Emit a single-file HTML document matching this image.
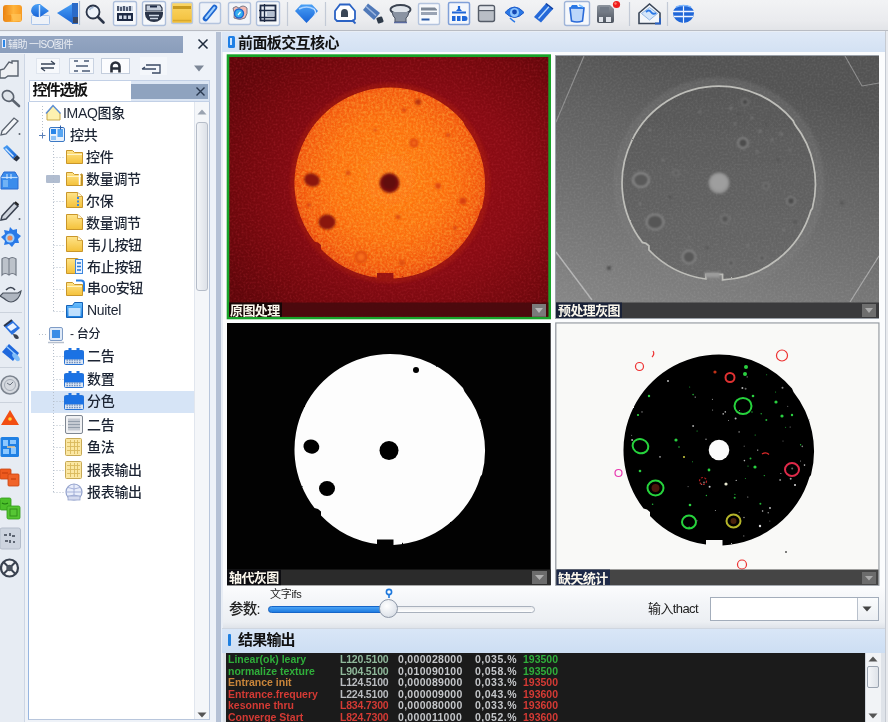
<!DOCTYPE html>
<html lang="zh">
<head>
<meta charset="utf-8">
<title>前面板交互核心</title>
<style>
html,body{margin:0;padding:0;}
body{width:888px;height:722px;overflow:hidden;position:relative;background:#e9eef5;font-family:"Liberation Sans","Noto Sans CJK SC",sans-serif;color:#1a1a1a;}
.abs{position:absolute;}
#app{position:absolute;left:0;top:0;width:888px;height:722px;overflow:hidden;filter:blur(0.45px);}
/* top toolbar */
#topbar{left:0;top:0;width:888px;height:31px;background:linear-gradient(#f2f3f5,#eaebee 70%,#e2e4e8);border-bottom:1px solid #b9bcc3;box-sizing:border-box;}
.tb{position:absolute;top:2px;width:24px;height:24px;}
/* left vertical toolbar */
#vbar{left:0;top:54px;width:25px;height:668px;background:#e7ecf3;border-right:1px solid #cdd6e4;box-sizing:border-box;}
/* left panel */
#lpanel{left:0px;top:32px;width:216px;height:690px;background:#eef2f8;}
#ltitle{left:0;top:36px;width:183px;height:17px;background:linear-gradient(#94a6c2,#8a9dbb);color:#fff;font-size:11px;line-height:17px;white-space:nowrap;overflow:hidden;}
#divider{left:216px;top:32px;width:5px;height:690px;background:#b5c1d5;}
#tree{left:27.500px;top:102px;width:182.500px;height:618px;background:#fff;border-left:1.500px solid #98b6e0;border-right:1px solid #b8c6dc;border-bottom:1px solid #b8c6dc;box-sizing:border-box;}
.ti{position:absolute;font-weight:500;font-size:14px;line-height:22px;height:22px;white-space:nowrap;color:#1c2433;letter-spacing:-0.3px;}
.ico{position:absolute;}
/* main */
#main{left:222px;top:32px;width:666px;height:690px;background:linear-gradient(#fbfcfd 0,#fbfcfd 554px,#f3f5f8 570px,#eceff3 590px,#dfe3e9 596px);border-left:1px solid #e9eef5;box-sizing:border-box;}
#mtitle{left:222px;top:32px;width:663px;height:20px;background:linear-gradient(#dfe9f7,#d3e1f3);}
.cap{position:absolute;height:15px;color:#fbf7ec;font-size:13px;font-weight:bold;line-height:15px;white-space:nowrap;letter-spacing:-0.6px;}
.con{position:absolute;font:bold 10.5px/11.55px "Liberation Sans",sans-serif;white-space:pre;letter-spacing:0px;}
</style>
</head>
<body>
<div id="app">
<div id="topbar" class="abs"></div>
<div id="lpanel" class="abs"></div>
<div id="vbar" class="abs"></div>
<div id="divider" class="abs"></div>
<div id="main" class="abs"></div>
<!--TOP-START-->
<svg class="abs" style="left:0;top:0;" width="888" height="32" viewBox="0 0 888 32">
<defs>
  <linearGradient id="og" x1="0" y1="0" x2="1" y2="0"><stop offset="0" stop-color="#e9800f"/><stop offset="0.55" stop-color="#ffb53e"/><stop offset="1" stop-color="#f79a22"/></linearGradient>
  <linearGradient id="bl" x1="0" y1="0" x2="0" y2="1"><stop offset="0" stop-color="#4aa0f6"/><stop offset="1" stop-color="#1763d6"/></linearGradient>
  <linearGradient id="yl" x1="0" y1="0" x2="0" y2="1"><stop offset="0" stop-color="#fbd768"/><stop offset="1" stop-color="#f3bf3a"/></linearGradient>
  <linearGradient id="gy" x1="0" y1="0" x2="0" y2="1"><stop offset="0" stop-color="#8d949e"/><stop offset="1" stop-color="#4c535e"/></linearGradient>
  <g id="btn"><rect x="0.500" y="0.500" width="23" height="24" rx="2" fill="#f6f8fb" stroke="#aebfdb" stroke-width="1.4"/></g>
</defs>
<!-- 1 orange -->
<rect x="3" y="5" width="19" height="17" rx="3" fill="url(#og)"/><path d="M11 14 h10 v7 h-8z" fill="#ffc45a" opacity=".7"/><path d="M4 15 h7 v6 h-6z" fill="#f0901a" opacity=".8"/>
<!-- 2 blue bubble -->
<rect x="31.500" y="15.500" width="18" height="9" rx="1" fill="#eef2f8" stroke="#a9c4ea"/><path d="M31 11 a7 7 0 0 1 7 -7 h2 l9 7 l-9 6 h-2 a7 7 0 0 1 -7 -6z" fill="url(#bl)"/><path d="M39.500 5 v12" stroke="#d6e8ff" stroke-width="1.4"/>
<!-- 3 blue left arrow -->
<path d="M57 13 l15 -9 v19z" fill="url(#bl)"/><path d="M72 3 h6 v21 h-6z" fill="#2a6ac8"/><path d="M73 17 h5 v6 h-5z" fill="#3a4660"/><path d="M79.500 1 v24" stroke="#a8bcd8" stroke-width="1.200"/>
<!-- 4 magnifier -->
<circle cx="93" cy="12" r="6.500" fill="#eef3fa" stroke="#2a3448" stroke-width="1.800"/><path d="M98 17 l5.500 5.500" stroke="#2a3448" stroke-width="2.600" stroke-linecap="round"/><path d="M89.500 10 a4 4 0 0 1 4 -2.500" stroke="#9fb4d0" stroke-width="1.500" fill="none"/>
<!-- 5 button calc -->
<use href="#btn" x="113" y="1"/><path d="M117 6 h16 v5 h-16z" fill="#c9d2e0"/><path d="M118 6 v5 M121 7 v4 M124 6 v5 M127 7 v4 M130 6 v5" stroke="#1e2a44" stroke-width="1.4"/><rect x="117" y="13" width="16" height="8" fill="#1e2a44"/><path d="M119 15.500 h3 v3.500 h-3z M123.500 15.500 h3 v3.500 h-3z M128 15.500 h3 v3.500 h-3z" fill="#cfd8e6"/>
<!-- 6 button basket -->
<use href="#btn" x="142" y="1"/><path d="M146 5 h14 l2 3 v3 h-16z" fill="#c5cedc" stroke="#2a3448" stroke-width="1.200"/><path d="M150 6.500 h7" stroke="#1e2a44" stroke-width="2"/><path d="M145 12 h18 v2 a9 8 0 0 1 -18 0z" fill="#2a3448"/><path d="M149 15.500 h10 M150 18.500 h8" stroke="#cfd8e6" stroke-width="1.300"/>
<!-- 7 yellow window -->
<rect x="171.500" y="2.500" width="21" height="21" rx="1.500" fill="url(#yl)" stroke="#b9c9e2" stroke-width="1.400"/><rect x="173" y="6" width="18" height="3" fill="#c89a20"/><path d="M173 20.500 h18" stroke="#d9a92c" stroke-width="1.500"/>
<!-- 8 pencil button -->
<rect x="199.500" y="2.500" width="21" height="21" rx="2" fill="#eef2f8" stroke="#b4c4de" stroke-width="1.400"/><path d="M205.500 18.500 l9 -11" stroke="#1e66d0" stroke-width="5.500" stroke-linecap="round"/><path d="M206 18 l8.500 -10.500" stroke="#9fd0ff" stroke-width="2" stroke-linecap="round"/>
<!-- 9 button circle -->
<rect x="228.500" y="2.500" width="22" height="22" rx="2" fill="#f3f5f9" stroke="#b4c4de" stroke-width="1.400"/><path d="M233 8 q3 -3 6 0 q4 -4 8 0 q1 6 -2 10 q-5 3 -11 0 q1 -5 -1 -10z" fill="#f3b8b0" stroke="#5a6478" stroke-width="0.800"/><circle cx="239" cy="13.500" r="4.500" fill="#36b0ee" stroke="#1e66d0" stroke-width="1.400"/><path d="M238 15 l2.500 -3" stroke="#fff" stroke-width="1.200"/>
<!-- 10 button frame -->
<use href="#btn" x="256" y="1"/><rect x="260.500" y="5.500" width="15" height="15" fill="#e6ebf3" stroke="#1e2a44" stroke-width="1.800"/><path d="M264.500 4 v18 M259 10.500 h17 M259 17.500 h17" stroke="#1e2a44" stroke-width="1.300"/><rect x="267" y="12" width="7" height="4" fill="#b4bfd0"/>
<!-- separators -->
<path d="M287.500 2 v24 M325.500 2 v24 M629.500 2 v24 M667.500 2 v24" stroke="#c3cad6" stroke-width="1.200"/>
<!-- 11 diamond -->
<path d="M295 11 l6 -6.500 h11 l6 6.500 l-11.500 12z" fill="url(#bl)"/><path d="M299 9 q7.500 -4 15 0" stroke="#a9d2ff" stroke-width="1.500" fill="none"/><path d="M314 9 q3 3 0 7" stroke="#cfe4ff" stroke-width="1.200" fill="none"/>
<!-- 12 house -->
<path d="M335 11 l5 -6.500 h9.500 l5.500 6.500 v8 l-2 2 h-16 l-2 -2z" fill="#fff" stroke="#2a62c4" stroke-width="1.800"/><path d="M341 17 v-4 a3.500 4 0 0 1 7 0 v4z" fill="#3a4656"/><path d="M352 20 l3.500 3.500" stroke="#2a62c4" stroke-width="1.800"/>
<!-- 13 bucket -->
<path d="M368 3.500 l12 9.500 l-6 7 l-11 -10z" fill="#4f78b8"/><path d="M366 6.500 l10 9" stroke="#9fb8e0" stroke-width="1.500"/><rect x="377" y="17" width="6" height="6" rx="1" fill="#2e3a4a" transform="rotate(-20 380 20)"/>
<!-- 14 stamp -->
<ellipse cx="400.500" cy="9.500" rx="10" ry="4.500" fill="#dfe4ea" stroke="#3a4250" stroke-width="1.800"/><path d="M392 12 q1 5 3 6 v4 h11 v-4 q2 -1 3 -6" fill="#8a93a2" stroke="#4a5260" stroke-width="1"/><path d="M394 22.500 h13" stroke="#5a6aa0" stroke-width="1.500"/>
<!-- 15 doc -->
<rect x="418.500" y="3.500" width="21" height="21" rx="1.500" fill="#f7f9fc" stroke="#b4c4de" stroke-width="1.400"/><path d="M421 7.500 h14 l2 2 v1 h-16z" fill="#7d8796"/><path d="M421 13.500 h16" stroke="#9aa4b4" stroke-width="3"/><path d="M421.500 19.500 h8" stroke="#2a5aa8" stroke-width="2"/>
<!-- 16 blue org button -->
<rect x="448.500" y="2.500" width="21" height="22" rx="1.500" fill="#f4f7fb" stroke="#7f9fd8" stroke-width="1.500"/><path d="M459 6 v5 M452 12.500 h14" stroke="#1e66d8" stroke-width="2.200"/><path d="M456 11 q3 -5 6 0z" fill="#1e66d8"/><path d="M452 16 h3.500 v5 h-3.500z M457 16 h3.500 v5 h-3.500z M462 16 h3 a2.500 2.500 0 0 1 0 5 h-3z" fill="#1e66d8"/>
<!-- 17 gray window -->
<rect x="478.500" y="5.500" width="16" height="16" rx="2" fill="#b9bec6" stroke="#555c68" stroke-width="1.400"/><path d="M479 10.500 h15" stroke="#555c68" stroke-width="1.300"/><rect x="479.500" y="6.500" width="14" height="3.500" fill="#e2e5ea"/>
<!-- 18 eye -->
<path d="M505 12.500 q9.500 -11 19 0 q-9.500 10 -19 0z" fill="#2a78e6" stroke="#1e5ac8" stroke-width="1"/><circle cx="514.500" cy="12.500" r="4.500" fill="#8cc4ff"/><circle cx="514.500" cy="12" r="2.400" fill="#1448b4"/><path d="M510 18 q3 3 5 4" stroke="#2a78e6" stroke-width="1.500" fill="none"/>
<!-- 19 blue pencil -->
<path d="M534 17 l12 -13.500 l7 5.500 l-12 13.500z" fill="#2468d8"/><path d="M538.500 18.500 l11.500 -13" stroke="#bfe0ff" stroke-width="1.300"/><path d="M546 3.500 l7 5.500" stroke="#0e3ea0" stroke-width="1.500"/>
<!-- 20 trash button -->
<rect x="564.500" y="1.500" width="25" height="24" rx="2" fill="#f6f8fb" stroke="#9fb4d8" stroke-width="1.400"/><path d="M570 8 h14 l-1.500 13 q-5.500 2 -11 0z" fill="#bcd6fa" stroke="#2a6ad8" stroke-width="1.600"/><path d="M570 8 l2 -3 h5 l1 2 h6 l-1 2" fill="#2a78e6"/><path d="M579 5 l4 2" stroke="#7fc0ff" stroke-width="1.500"/>
<!-- 21 save + red dot -->
<path d="M597 7 q0 -2 2 -2 h11 l4 4 v12 q0 2 -2 2 h-13 q-2 0 -2 -2z" fill="url(#gy)"/><rect x="600" y="7" width="9" height="5" fill="#727a86"/><path d="M599 17 h4 v5 h-4z M606 17 h5 v5 h-5z" fill="#dfe3e9"/><circle cx="616.500" cy="4.500" r="3.600" fill="#ee1c1c"/><circle cx="615.500" cy="3.500" r="1.200" fill="#ff7a6a"/>
<!-- 22 envelope -->
<path d="M639 13 l10.500 -9 l10.500 9 v10.500 h-21z" fill="#f3f6fa" stroke="#3a4658" stroke-width="1.600"/><path d="M641.500 13.500 l8 -6 l8 6 l-8 6.500z" fill="#d5e6fa" stroke="#7fa8dc" stroke-width="0.800"/><path d="M646 12 q3 -3 5 0 q2 3 5 1" stroke="#2a78e6" stroke-width="1.800" fill="none"/><path d="M660 18 v5.500 h-5" stroke="#2a62c4" stroke-width="1.800" fill="none"/>
<!-- 23 globe -->
<path d="M673 13 a10.500 8 0 0 1 21 0 a10.500 10 0 0 1 -21 0z" fill="#1f66d8"/><path d="M673 11.500 h21 M674 16.500 h19" stroke="#eef4ff" stroke-width="1.400"/><path d="M683.500 5 v18" stroke="#eef4ff" stroke-width="1.200"/><path d="M676 7 q7.500 -3 15 0" stroke="#7fb8ff" stroke-width="1.400" fill="none"/>
</svg>
<!--TOP-END-->
<!--VB-START-->
<svg class="abs" style="left:0;top:32px;" width="26" height="690" viewBox="0 32 26 690">
<defs>
  <linearGradient id="vb" x1="0" y1="0" x2="1" y2="1"><stop offset="0" stop-color="#4aa0f6"/><stop offset="1" stop-color="#1560d0"/></linearGradient>
</defs>
<!-- 1 hand/folder -->
<path d="M0 70 l4 -1 l5 -7 l3 1 v-2 h6 v15 h-10 l-3 2 h-5z" fill="#eef0f3" stroke="#5a626e" stroke-width="1.400"/>
<!-- 2 magnifier -->
<ellipse cx="8" cy="96" rx="6" ry="5" fill="#dfe4ea" stroke="#5a626e" stroke-width="1.600" transform="rotate(35 8 96)"/><path d="M12.500 100 l6.500 6" stroke="#5a626e" stroke-width="2.600" stroke-linecap="round"/>
<!-- 3 pencil outline -->
<path d="M2 131 l12 -13 l4 3 l-12 13 l-5 1z" fill="#f4f6f9" stroke="#5a626e" stroke-width="1.300"/><circle cx="19.500" cy="134" r="1" fill="#5a626e"/>
<!-- 4 blue marker -->
<path d="M3 148 l4 -3 l10 10 l-4 4z" fill="url(#vb)"/><path d="M5.500 148.500 l8 8" stroke="#cfe6ff" stroke-width="1.400"/><path d="M13 159 l4 -4 l3 3 l-3.500 3.500z" fill="#2a3242"/>
<!-- 5 blue box -->
<path d="M1 177 l3 -5 h11 l3 5 v12 h-17z" fill="#3a8cec" stroke="#2a6ad0" stroke-width="1"/><path d="M1.500 177.500 h16" stroke="#bcdcff" stroke-width="1.200"/><path d="M7 174 v5 M11 174 v5" stroke="#d6eaff" stroke-width="1"/><rect x="3" y="180" width="5" height="7" fill="#7fbcf8" opacity=".8"/>
<!-- 6 pencil dark -->
<path d="M2 216 l12 -13 l4 3 l-12 13 l-5 1z" fill="#cfd5de" stroke="#3a4250" stroke-width="1.500"/><path d="M15 202 l3.500 3" stroke="#222" stroke-width="2"/><circle cx="19.500" cy="219" r="1" fill="#5a626e"/>
<!-- 7 blue gear -->
<path d="M10 227 l3 3 l4 -1 l0 4 l4 3 l-3 3 l1 4 l-4 0 l-3 4 l-3 -3 l-5 1 l1 -4 l-4 -4 l4 -3 l-1 -4 l5 1z" fill="#2a7ae8"/><circle cx="10" cy="238" r="4.500" fill="#9fd0ff"/><circle cx="10" cy="238" r="2.600" fill="#e88a5a"/>
<!-- 8 book -->
<path d="M2 259 q3 -3 7 0 q3 -3 7 0 v16 q-4 -3 -7 0 q-4 -3 -7 0z" fill="#bcc2ca" stroke="#707884" stroke-width="1.200"/><path d="M9 259 v16" stroke="#707884" stroke-width="1"/>
<!-- 9 teapot -->
<path d="M6 290 q5 -5 9 0" stroke="#3a4250" stroke-width="1.600" fill="none"/><path d="M3 293 h15 l3 -2 q-1 6 -5 9 q-5 4 -10 0 q-2 -2 -6 -4z" fill="#aeb5bf" stroke="#4a525e" stroke-width="1.200"/>
<path d="M0 312.500 h22 M0 367.500 h22 M0 402.500 h22" stroke="#cbd2dc" stroke-width="1"/>
<!-- 10 paint bucket -->
<path d="M4 326 l8 -6 l8 8 l-8 7z" fill="#2a72e0"/><path d="M7 327 l6 -4 l4 4 l-6 4z" fill="#eaf3ff"/><path d="M4 326 l8 -6" stroke="#2a3448" stroke-width="2"/><path d="M13 334 q4 0 5 2 q2 3 -1 3 q-3 0 -4 -5z" fill="#3a4250"/>
<!-- 11 blue cylinder -->
<path d="M2 352 l7 -8 l10 9 l-6 8z" fill="#1f68dc"/><ellipse cx="16" cy="357" rx="2.500" ry="5" fill="#7fbcf8" transform="rotate(-40 16 357)"/><path d="M6 346 l9 8" stroke="#9fd0ff" stroke-width="1.200"/>
<!-- 12 gray circle -->
<circle cx="10" cy="385" r="9" fill="#d5d9df" stroke="#7c848f" stroke-width="1.600"/><circle cx="10" cy="385" r="5.500" fill="none" stroke="#a5acb6" stroke-width="1"/><path d="M7 383 l3 2 l3 -3" stroke="#6a727e" stroke-width="1" fill="none"/>
<!-- 13 triangle -->
<path d="M1 425 l9 -15 l9 15z" fill="#f24e12"/><circle cx="10" cy="419" r="1.800" fill="#ffd23a"/>
<!-- 14 blue grid -->
<rect x="0.500" y="437" width="18.500" height="20" rx="1.500" fill="#1f80e4"/><path d="M3 440 h5 v6 h-5z M10 440 h6 v4 h-6z M3 449 h6 v5 h-6z M11 447 h5 v7 h-5z" fill="#8cc8ff"/><path d="M7 447 h8" stroke="#f0c890" stroke-width="1.500"/>
<!-- 15 orange squares -->
<rect x="0" y="469" width="11" height="10" rx="1" fill="#ee5a1e" stroke="#c84410" stroke-width="0.800"/><rect x="8" y="474" width="11" height="12" rx="1" fill="#f0642a" stroke="#c84410" stroke-width="0.800"/><path d="M2 473 h6 M11 479 h5" stroke="#c03a0a" stroke-width="1"/>
<!-- 16 green squares -->
<rect x="0" y="498" width="11" height="12" rx="1.500" fill="#4cc02a" stroke="#2e9a18" stroke-width="0.800"/><rect x="7" y="506" width="13" height="13" rx="1.500" fill="#56c634" stroke="#2e9a18" stroke-width="0.800"/><path d="M2 503 q3 2 6 0" stroke="#1e7a10" stroke-width="1.200" fill="none"/><rect x="10" y="509" width="7" height="7" fill="none" stroke="#2e8a1a" stroke-width="0.900"/>
<!-- 17 gray button -->
<rect x="0" y="528" width="20.500" height="21" rx="2" fill="#cdd4df" stroke="#b4bdcb" stroke-width="1"/><path d="M4 535 h3 M10 533 v3 M12 536 h3 M5 541 h3 M10 540 v3 M13 542 h2" stroke="#3a4250" stroke-width="1.500"/>
<!-- 18 wheel -->
<circle cx="9.500" cy="568" r="8.500" fill="#f4f5f7" stroke="#3a4250" stroke-width="2.200"/><circle cx="9.500" cy="568" r="3.200" fill="#4a525e"/><path d="M3.500 562 l4 4 M15.500 562 l-4 4 M3.500 574 l4 -4 M15.500 574 l-4 -4" stroke="#3a4250" stroke-width="2"/>
</svg>
<!--VB-END-->
<!--LEFT-START-->
<!-- left panel title -->
<div id="ltitle" class="abs"><span style="display:inline-block;width:4px;height:9px;background:#2b86e6;border:1px solid #dfeaff;margin:3px 2px 0 2px;vertical-align:top;box-sizing:border-box;"></span><span style="letter-spacing:-0.6px;opacity:.8;font-size:10px;">辅助 一ISO图件</span></div>
<svg class="abs" style="left:197px;top:38px;" width="12" height="12" viewBox="0 0 12 12"><path d="M1.5 1.5 L10.5 10.5 M10.5 1.5 L1.5 10.5" stroke="#1d2a3c" stroke-width="1.5" fill="none"/></svg>
<!-- sub toolbar -->
<div class="abs" style="left:36px;top:58px;width:24px;height:16px;background:#f7f9fc;border:1px solid #dfe5ee;box-sizing:border-box;"></div>
<div class="abs" style="left:69px;top:58px;width:25px;height:16px;background:#f7f9fc;border:1px solid #c9d3e2;box-sizing:border-box;"></div>
<div class="abs" style="left:101px;top:58px;width:29px;height:16px;background:#fbfcfe;border:1px solid #c3cddc;box-sizing:border-box;"></div>
<div class="abs" style="left:140px;top:57px;width:27px;height:18px;background:#f4f7fb;"></div>
<svg class="abs" style="left:36px;top:57px;" width="180" height="20" viewBox="0 0 180 20" fill="none" stroke="#3a4658" stroke-width="1.3">
  <path d="M5 7 h14 M19 7 l-4 -3 M5 11 h13 M5 11 l4 3"/>
  <path d="M38 4 h4 M48 4 h5 M40 9 h12 M38 14 h4 M46 14 h8" stroke="#4a5a74"/>
  <path d="M75.500 15.500 v-6 a4 4 0 0 1 8 0 v6 M75.500 11.500 h8" stroke="#2a2f3a" stroke-width="2.600"/>
  <path d="M110 8 h14 v8 h-8 M106 12 h14 M106 12 l3 -2" stroke="#3a4a64"/>
  <path d="M158 8.500 h10 l-5 6z" fill="#7d8797" stroke="none"/>
</svg>
<!-- search row -->
<div class="abs" style="left:29px;top:80px;width:181px;height:22px;background:#dce6f4;border:1px solid #c2d0e6;box-sizing:border-box;"></div>
<div class="abs" style="left:131px;top:83.500px;width:77px;height:15px;background:#8fa3bf;"></div>
<div class="abs" style="left:30px;top:81px;width:101px;height:20px;background:#fff;"></div>
<div class="abs" style="left:32.500px;top:80px;font-size:15px;line-height:20px;font-weight:bold;color:#111;white-space:nowrap;letter-spacing:-1.500px;">控件选板</div>
<svg class="abs" style="left:195px;top:85.500px;" width="11" height="11" viewBox="0 0 11 11"><path d="M1.500 1.500 L9.500 9.500 M9.500 1.500 L1.500 9.500" stroke="#2a3950" stroke-width="1.400" fill="none"/></svg>
<!-- tree -->
<div id="tree" class="abs"></div>
<div class="abs" style="left:31px;top:391px;width:163px;height:22px;background:#d6e4f6;"></div>
<!-- tree dotted lines -->
<svg class="abs" style="left:30px;top:101px;" width="165" height="420" viewBox="0 0 165 420" fill="none" stroke="#b7c0cc" stroke-width="1" stroke-dasharray="1 2">
  <path d="M12.5 5 v30 M9 34.500 h8"/>
  <path d="M23.500 44 v168 M23.500 56.500 h10 M23.500 100.500 h10 M23.500 144.500 h10 M23.500 166.500 h10 M23.500 188.500 h10 M23.500 210.500 h10"/>
  <path d="M9 233.500 h8"/>
  <path d="M23.500 243 v150 M23.500 255.500 h10 M23.500 278.500 h10 M23.500 300.500 h10 M23.500 324.500 h10 M23.500 346.500 h10 M23.500 369.500 h10 M23.500 391.500 h10"/>
</svg>
<div class="abs" style="left:46px;top:175px;width:14px;height:8px;background:#a9b6cb;border-radius:1px;opacity:.9;"></div>
<!-- tree icons -->
<svg class="abs" style="left:30px;top:101px;" width="165" height="420" viewBox="0 0 165 420">
  <defs>
    <linearGradient id="fy" x1="0" y1="0" x2="0" y2="1"><stop offset="0" stop-color="#ffe48a"/><stop offset="1" stop-color="#f4c13a"/></linearGradient>
    <linearGradient id="fb" x1="0" y1="0" x2="0" y2="1"><stop offset="0" stop-color="#6cc0ff"/><stop offset="1" stop-color="#1b7fe0"/></linearGradient>
    <g id="fold"><path d="M0.5 3.500 h6 l2 2 h8 v11 h-16z" fill="url(#fy)" stroke="#c9962a" stroke-width="1"/><path d="M1 7.500 h15" stroke="#fff3c4" stroke-width="1"/></g>
    <g id="foldp"><path d="M0.5 1.500 h11 l5 4 v11 h-16z" fill="url(#fy)" stroke="#c9962a" stroke-width="1"/><path d="M11.500 1.500 v4 h5" fill="#fff8dc" stroke="#c9962a" stroke-width="0.8"/></g>
    <g id="cal"><rect x="0.500" y="3.500" width="19" height="14" rx="1" fill="#dbe6f4" stroke="#2a74d4"/><path d="M0.500 4 h4 v-3 h3 v3 h5 v-3 h3 v3 h4 v8.500 h-19z" fill="#1b72e4"/><path d="M2.500 13 h15 M2.500 15.500 h15" stroke="#6f8fbf" stroke-width="1.300" stroke-dasharray="1.500 1"/></g>
    <g id="grid"><rect x="0.500" y="0.500" width="16" height="17" rx="1" fill="#fbe7a2" stroke="#c7a955"/><path d="M2 4.500 h13 M2 8.500 h13 M2 12.500 h13 M5.500 2 v14 M9.500 2 v14 M12.500 2 v14" stroke="#d9b95c" stroke-width="0.9"/></g>
  </defs>
  <!-- IMAQ icon -->
  <path d="M17 12 l6 -7 l7 7 v7 h-13z" fill="#fdf1b0" stroke="#c8a84a" stroke-width="1"/><path d="M16 12.500 l7 -8 l7.500 8" fill="none" stroke="#5c8fd6" stroke-width="1.4"/>
  <!-- 控件 group icon -->
  <rect x="19.500" y="26.500" width="15" height="14" rx="1.500" fill="#e8f1fc" stroke="#3b78c4"/><rect x="21" y="28" width="5" height="5" fill="#2a86e8"/><rect x="27.500" y="28" width="5.500" height="8" fill="#58a6f2"/><rect x="21" y="35" width="5" height="4" fill="#8ec2f6"/><path d="M30.500 24.500 v4 M28.500 26.500 h4" stroke="#2a5ca6" stroke-width="1"/>
  <path d="M9 34.500 h6 M12.500 31.500 v6" stroke="#5a7fb8" stroke-width="1" />
  <use href="#fold" x="36" y="46"/>
  <g transform="translate(36,68)"><use href="#fold"/><path d="M13.500 4 v12" stroke="#fff" stroke-width="1.500"/><path d="M15.500 4.500 v12" stroke="#b89030" stroke-width="1"/></g>
  <g transform="translate(36,90)"><use href="#foldp"/><path d="M12 6 v9" stroke="#3a86de" stroke-width="2" stroke-dasharray="2 1.500"/></g>
  <use href="#foldp" x="36" y="112"/>
  <use href="#foldp" x="36" y="134"/>
  <g transform="translate(36,156)"><use href="#foldp"/><rect x="9.500" y="2.500" width="7" height="14" fill="#eaf3ff" stroke="#3b86de"/><path d="M11 6 h4 M11 9.500 h4 M11 13 h4" stroke="#2a78d6" stroke-width="1.500"/></g>
  <g transform="translate(36,178)"><use href="#fold"/><path d="M10 1.500 h5 a3 3 0 0 1 3 3 v8" fill="none" stroke="#2a7fe0" stroke-width="2"/></g>
  <g transform="translate(36,200)"><path d="M0.500 4.500 h6 l2 -3 h8 v15 h-16z" fill="url(#fb)" stroke="#1562b8"/><rect x="2.500" y="7" width="12" height="8" fill="#cfe8ff" opacity=".9"/></g>
  <!-- 台分 group -->
  <rect x="19.500" y="226.500" width="13" height="13" rx="1.500" fill="#dfeaf8" stroke="#7f9cc6"/><rect x="22" y="229" width="8" height="8" fill="#3a8de6"/><path d="M18 241.500 h16" stroke="#b6bfcc" stroke-width="1.500"/>
  <use href="#cal" x="34" y="246"/>
  <use href="#cal" x="34" y="269"/>
  <use href="#cal" x="34" y="291"/>
  <g transform="translate(35,314)"><rect x="0.500" y="0.500" width="17" height="18" rx="1.500" fill="#f0f1f3" stroke="#7f8792"/><rect x="3" y="3.500" width="12" height="12" fill="#c5cad2"/><path d="M3 6.500 h12 M3 9.500 h12 M3 12.500 h12" stroke="#8f98a6" stroke-width="0.9"/></g>
  <use href="#grid" x="35" y="337"/>
  <use href="#grid" x="35" y="360"/>
  <g transform="translate(35,382)"><circle cx="9" cy="9" r="8" fill="#e9eefb" stroke="#94a3cc" stroke-width="1.2"/><path d="M1 9 h16 M9 1 v16 M3 4.500 q6 3 12 0 M3 13.500 q6 -3 12 0" stroke="#9fabd6" stroke-width="0.9" fill="none"/><rect x="3" y="13" width="12" height="4" fill="#d5dbef" stroke="#94a3cc" stroke-width="0.8"/></g>
</svg>
<!-- tree labels -->
<div class="ti" style="left:63px;top:102px;">IMAQ图象</div>
<div class="ti" style="left:70px;top:124px;">控共</div>
<div class="ti" style="left:86px;top:146px;">控件</div>
<div class="ti" style="left:86px;top:168px;">数量调节</div>
<div class="ti" style="left:86px;top:190px;">尔保</div>
<div class="ti" style="left:86px;top:212px;">数量调节</div>
<div class="ti" style="left:87px;top:234px;">韦儿按钮</div>
<div class="ti" style="left:87px;top:256px;">布止按钮</div>
<div class="ti" style="left:87px;top:277px;">串oo安钮</div>
<div class="ti" style="left:87px;top:299px;">Nuitel</div>
<div class="ti" style="left:70px;top:323px;font-size:12px;">- 台分</div>
<div class="ti" style="left:87px;top:345px;">二告</div>
<div class="ti" style="left:87px;top:368px;">数置</div>
<div class="ti" style="left:87px;top:390px;">分色</div>
<div class="ti" style="left:87px;top:414px;">二告</div>
<div class="ti" style="left:87px;top:436px;">鱼法</div>
<div class="ti" style="left:87px;top:459px;">报表输出</div>
<div class="ti" style="left:87px;top:481px;">报表输出</div>
<!-- tree scrollbar -->
<div class="abs" style="left:194px;top:102px;width:15px;height:617px;background:#f4f6f9;border-left:1px solid #e1e6ee;box-sizing:border-box;"></div>
<svg class="abs" style="left:197px;top:109px;" width="10" height="6" viewBox="0 0 10 6"><path d="M0.5 5.5 h9 l-4.5 -5z" fill="#9aa3b0"/></svg>
<div class="abs" style="left:196px;top:122px;width:12px;height:169px;box-sizing:border-box;border:1px solid #b5bcc8;border-radius:3px;background:linear-gradient(90deg,#f3f5f8,#dde1e8);"></div>
<svg class="abs" style="left:197px;top:712px;" width="10" height="6" viewBox="0 0 10 6"><path d="M0.5 0.5 h9 l-4.5 5z" fill="#555"/></svg>
<!--LEFT-END-->
<!--MAINPANEL-->
<!--IMAGES-START-->
<!-- main title -->
<div id="mtitle" class="abs"></div>
<div class="abs" style="left:227.500px;top:36px;width:7px;height:11.500px;background:#1e7fe6;border-radius:1.500px;box-sizing:border-box;"></div><div class="abs" style="left:230px;top:38px;width:2px;height:7px;background:#cfe6ff;"></div>
<div class="abs" style="left:238px;top:33px;font-size:15px;line-height:20px;font-weight:bold;color:#111;white-space:nowrap;letter-spacing:-0.6px;">前面板交互核心</div>

<svg class="abs" style="left:0;top:0;" width="888" height="722" viewBox="0 0 888 722">
<defs>
  <filter id="nz1" x="0" y="0" width="100%" height="100%">
    <feTurbulence type="fractalNoise" baseFrequency="0.42" numOctaves="2" seed="3" result="n"/>
    <feColorMatrix in="n" type="matrix" values="0 0 0 0 1  0 0 0 0 0.6  0 0 0 0 0.08  1.8 0 0 0 -0.7"/>
    <feComposite in2="SourceGraphic" operator="in"/>
  </filter>
  <filter id="nz1b" x="0" y="0" width="100%" height="100%">
    <feTurbulence type="fractalNoise" baseFrequency="0.38" numOctaves="2" seed="11" result="n"/>
    <feColorMatrix in="n" type="matrix" values="0 0 0 0 0.92  0 0 0 0 0.27  0 0 0 0 0.03  1.8 0 0 0 -0.72"/>
    <feComposite in2="SourceGraphic" operator="in"/>
  </filter>
  <filter id="nz1d" x="0" y="0" width="100%" height="100%">
    <feTurbulence type="fractalNoise" baseFrequency="0.5" numOctaves="2" seed="8" result="n"/>
    <feColorMatrix in="n" type="matrix" values="0 0 0 0 0.62  0 0 0 0 0.04  0 0 0 0 0.06  1.2 0 0 0 -0.5"/>
    <feComposite in2="SourceGraphic" operator="in"/>
  </filter>
  <filter id="nz2" x="0" y="0" width="100%" height="100%">
    <feTurbulence type="fractalNoise" baseFrequency="0.5" numOctaves="2" seed="5" result="n"/>
    <feColorMatrix in="n" type="matrix" values="0 0 0 0 1  0 0 0 0 1  0 0 0 0 1  0.5 0 0 0 -0.2"/>
    <feComposite in2="SourceGraphic" operator="in"/>
  </filter>
  <filter id="rough" x="-5%" y="-5%" width="110%" height="110%">
    <feTurbulence type="fractalNoise" baseFrequency="0.25" numOctaves="2" seed="2" result="t"/>
    <feDisplacementMap in="SourceGraphic" in2="t" scale="1.6"/>
  </filter>
  <filter id="b1"><feGaussianBlur stdDeviation="0.8"/></filter>
  <filter id="b2"><feGaussianBlur stdDeviation="1.6"/></filter>
  <filter id="b05"><feGaussianBlur stdDeviation="0.5"/></filter>
  <radialGradient id="g1bg" cx="58%" cy="50%" r="68%">
    <stop offset="0" stop-color="#960d15"/><stop offset="0.5" stop-color="#880b13"/><stop offset="0.8" stop-color="#72080d"/><stop offset="1" stop-color="#60060a"/>
  </radialGradient>
  <radialGradient id="g1c" cx="50%" cy="48%" r="52%">
    <stop offset="0" stop-color="#ff7c14"/><stop offset="0.6" stop-color="#fc6c0e"/><stop offset="0.88" stop-color="#f4580e"/><stop offset="1" stop-color="#e8440e"/>
  </radialGradient>
  <linearGradient id="g2bg" x1="0.3" y1="0" x2="0" y2="1">
    <stop offset="0" stop-color="#535353"/><stop offset="0.25" stop-color="#616161"/><stop offset="0.55" stop-color="#707070"/><stop offset="1" stop-color="#898989"/>
  </linearGradient>
  <linearGradient id="g2d" x1="0" y1="0" x2="0" y2="1">
    <stop offset="0" stop-color="#565656"/><stop offset="1" stop-color="#686868"/>
  </linearGradient>
  <clipPath id="c1"><rect x="229.300" y="57" width="319" height="259.700"/></clipPath>
  <clipPath id="c2"><rect x="556" y="56" width="323" height="262"/></clipPath>
  <clipPath id="c3"><rect x="227" y="322.800" width="323.700" height="262.400"/></clipPath>
  <clipPath id="c4"><rect x="556.400" y="323.600" width="322" height="261.400"/></clipPath>
  <!-- disc shape with notches, centered at 0,0 radius 95 -->
  <path id="disc" d="M0,-95.5 A95.5,95.5 0 0 1 73,-61.5 L74.5,-58 A95.5,95.5 0 0 1 92,25 L90.5,27 A95.5,95.5 0 0 1 3.5,95.4 L3.5,90 L-13,90 L-13,94.6 A95.5,95.5 0 0 1 -69,66 L-69,62 L-72,59.5 L-75.5,58.5 A95.5,95.5 0 0 1 0,-95.5 Z"/>
</defs>

<!-- ===== Image 1: red / orange ===== -->
<rect x="226.700" y="54.300" width="324.300" height="265" fill="#17a329"/>
<g clip-path="url(#c1)">
  <rect x="229" y="56" width="320" height="262" fill="url(#g1bg)"/>
  <rect x="229" y="56" width="320" height="262" fill="#fff" filter="url(#nz1d)" opacity="0.5"/>
  <g transform="translate(390,183)">
    <circle r="100" fill="#c22a10" opacity="0.3" filter="url(#b2)"/>
    <g filter="url(#b05)"><use href="#disc" fill="url(#g1c)" filter="url(#rough)"/></g>
  </g>
  <g filter="url(#b05)" transform="translate(390,183)"><use href="#disc" fill="#fff" filter="url(#nz1)" opacity="0.55"/><use href="#disc" fill="#fff" filter="url(#nz1b)" opacity="0.5"/></g>
  <g filter="url(#b1)">
    <ellipse cx="389.5" cy="183" rx="10" ry="10" fill="#7a0c0a"/>
    <ellipse cx="389.5" cy="182.5" rx="7" ry="7" fill="#620707"/>
    <ellipse cx="312" cy="180" rx="8" ry="6.5" fill="#8a1208" transform="rotate(20 312 180)"/>
    <ellipse cx="327" cy="222" rx="8.5" ry="7.5" fill="#8a1208"/>
    <circle cx="361" cy="257" r="6.5" fill="#e2500f"/><circle cx="361" cy="257" r="3.5" fill="#f8701c"/>
    <circle cx="414" cy="143" r="4.5" fill="#e0480e"/><circle cx="414" cy="143" r="2" fill="#f8701c"/>
    <circle cx="418" cy="102" r="3" fill="#b8300a"/>
    <circle cx="404" cy="110" r="2" fill="#d8440e"/>
    <circle cx="438" cy="186" r="3" fill="#e0480e"/>
    <circle cx="463" cy="201" r="3.5" fill="#d8400c"/>
    <circle cx="348" cy="173" r="2.5" fill="#e0500e"/>
    <circle cx="398" cy="217" r="2.5" fill="#e0500e"/>
    <circle cx="455" cy="228" r="2" fill="#d8440e"/>
    <circle cx="402" cy="263" r="3" fill="#e0500e"/>
    <circle cx="309" cy="205" r="2" fill="#d8440e"/>
    <circle cx="448" cy="135" r="2" fill="#d8440e"/>
    <circle cx="375" cy="130" r="2" fill="#e8560f"/>
  </g>
  <rect x="229" y="302.500" width="320" height="15" fill="#4a0a0e" opacity="0.95"/><rect x="229" y="302.500" width="53" height="15" fill="#160606"/>
  <rect x="532" y="304" width="14" height="13" fill="#7a7a7a"/>
  <path d="M535 308 h8 l-4 5z" fill="#b8b8b8"/>
</g>

<!-- ===== Image 2: gray ===== -->
<rect x="555" y="55" width="324" height="264" fill="#9aa0a8"/>
<g clip-path="url(#c2)">
  <rect x="556" y="56" width="323" height="262" fill="url(#g2bg)"/>
  <g filter="url(#b05)" fill="none">
    <path d="M556,122 L584,56" stroke="#8e8e8e" stroke-width="1.1"/>
    <path d="M845,56 L862,86 L879,83" stroke="#8c8c8c" stroke-width="1.1"/>
    <path d="M556,252 L592,300" stroke="#b4b4b4" stroke-width="1.4"/>
    <path d="M879,256 L850,302" stroke="#a8a8a8" stroke-width="1.2"/>
  </g>
  <g transform="translate(719,183) scale(1.015)">
    <circle r="104" fill="#808080" opacity="0.3" filter="url(#b2)"/>
    <g filter="url(#b05)"><use href="#disc" fill="url(#g2d)" stroke="#bdbdb8" stroke-width="1.700" filter="url(#rough)"/></g>
  </g>
  <rect x="556" y="56" width="323" height="262" fill="#fff" filter="url(#nz2)" opacity="0.35"/>
  <g filter="url(#b1)">
    <circle cx="719" cy="183" r="10.500" fill="#949494"/><circle cx="719" cy="182.500" r="8" fill="#9e9e9e"/>
    <ellipse cx="641" cy="180" rx="8" ry="7" fill="#5a5a5a" stroke="#969696" stroke-width="1.500"/>
    <ellipse cx="655" cy="222" rx="8.500" ry="7.500" fill="#565656" stroke="#909090" stroke-width="1.500"/>
    <circle cx="689" cy="257" r="6.500" fill="#585858" stroke="#8e8e8e" stroke-width="1.400"/>
    <circle cx="743" cy="143" r="5" fill="#4e4e4e" stroke="#8e8e8e" stroke-width="1.400"/>
    <circle cx="745" cy="102" r="3.500" fill="#4a4a4a" stroke="#858585" stroke-width="1"/>
    <circle cx="791" cy="201" r="4" fill="#4e4e4e" stroke="#8e8e8e" stroke-width="1.200"/>
    <circle cx="766" cy="186" r="3" fill="#585858" stroke="#808080" stroke-width="1"/>
    <circle cx="725" cy="219" r="4" fill="#565656" stroke="#868686" stroke-width="1.100"/>
    <circle cx="676" cy="173" r="3" fill="#5a5a5a" stroke="#7c7c7c" stroke-width="1"/>
    <circle cx="762" cy="258" r="3" fill="#585858" stroke="#808080" stroke-width="1"/>
    <circle cx="731" cy="263" r="3" fill="#585858" stroke="#808080" stroke-width="1"/>
    <circle cx="609" cy="268" r="2" fill="#484848"/>
    <circle cx="842" cy="203" r="1.500" fill="#4a4a4a"/>
    <g fill="#7c7c7c"><circle cx="731" cy="108" r="1.500"/><circle cx="752" cy="118" r="1.300"/><circle cx="760" cy="131" r="1.500"/><circle cx="772" cy="140" r="1.300"/><circle cx="735" cy="124" r="1.200"/><circle cx="757" cy="152" r="1.200"/><circle cx="781" cy="134" r="1.400"/><circle cx="790" cy="150" r="1.200"/><circle cx="700" cy="112" r="1.200"/><circle cx="663" cy="160" r="1.200"/><circle cx="640" cy="204" r="1.300"/><circle cx="784" cy="230" r="1.300"/><circle cx="748" cy="246" r="1.300"/><circle cx="689" cy="238" r="1.200"/><circle cx="650" cy="130" r="1.200"/></g>
    <g fill="#4a4a4a"><circle cx="738" cy="114" r="1.200"/><circle cx="766" cy="124" r="1.200"/><circle cx="778" cy="160" r="1.200"/><circle cx="795" cy="222" r="1.300"/><circle cx="707" cy="248" r="1.200"/><circle cx="670" cy="197" r="1.200"/></g>
    <rect x="705" y="272.500" width="15" height="5" fill="#9a9a9a"/>
  </g>
  <rect x="556" y="302.500" width="323" height="16" fill="#3a3a3c"/><rect x="556" y="302.500" width="66" height="16" fill="#1a2238"/>
  <rect x="862" y="304" width="14" height="13" fill="#6e6e6e"/>
  <path d="M865 308 h8 l-4 5z" fill="#aaa"/>
</g>

<!-- ===== Image 3: binary ===== -->
<g clip-path="url(#c3)">
  <rect x="227" y="323" width="324" height="263" fill="#020202"/>
  <g transform="translate(390,449.5)" filter="url(#b05)"><use href="#disc" fill="#fdfdfd" filter="url(#rough)"/></g>
  <g filter="url(#b05)" fill="#020202">
    <circle cx="389" cy="450.5" r="9.5"/>
    <ellipse cx="311.5" cy="446.5" rx="8" ry="7" transform="rotate(15 311 446)"/>
    <ellipse cx="327" cy="488.5" rx="8" ry="7.5"/>
    <circle cx="416" cy="370" r="3"/>
  </g>
  <rect x="227" y="569.500" width="324" height="16" fill="#2b2b2b"/><rect x="227" y="569.500" width="54" height="16" fill="#0c0c10"/>
  <rect x="532" y="571" width="15" height="13" fill="#6c6c6c"/>
  <path d="M535 575 h9 l-4.5 5z" fill="#b0b0b0"/>
</g>

<!-- ===== Image 4: defects ===== -->
<rect x="555.200" y="322.400" width="324.300" height="263.400" fill="#8f959c"/>
<g clip-path="url(#c4)">
  <rect x="556" y="323" width="323" height="263" fill="#f9f9f7"/>
  <g transform="translate(719,450)" filter="url(#b05)"><use href="#disc" fill="#040404" filter="url(#rough)"/></g>
  <g filter="url(#b05)">
    <circle cx="719" cy="450" r="10.300" fill="#fafafa"/>
  </g>
  <g filter="url(#b05)" fill="none" stroke-width="2">
    <ellipse cx="743" cy="406" rx="8.5" ry="8" stroke="#27d33c"/>
    <ellipse cx="640.5" cy="446" rx="8" ry="7" stroke="#27d33c" transform="rotate(20 640 446)"/>
    <ellipse cx="655.5" cy="488" rx="8" ry="7.5" stroke="#27d33c"/>
    <circle cx="655.5" cy="488" r="4" fill="#4a1408" stroke="none"/>
    <ellipse cx="689" cy="522" rx="7" ry="6.5" stroke="#27d33c"/>
    <ellipse cx="733.5" cy="521" rx="7" ry="6.5" stroke="#b5b52a"/>
    <circle cx="733.5" cy="521" r="3" fill="#4a2008" stroke="none"/>
    <ellipse cx="792" cy="469.5" rx="7" ry="6.5" stroke="#e02a4a"/>
    <circle cx="730" cy="377.5" r="4.5" stroke="#e03030"/>
    <circle cx="639.5" cy="366.5" r="4" stroke="#ee3030" stroke-width="1.2"/>
    <circle cx="782" cy="355.5" r="5.5" stroke="#ee3030" stroke-width="1.2"/>
    <circle cx="742" cy="564.5" r="4.5" stroke="#ee3030" stroke-width="1.2"/>
    <circle cx="618.5" cy="473" r="3.5" stroke="#e838b0" stroke-width="1.2"/>
    <path d="M652 357 q3 -3 1 -6" stroke="#ee3030" stroke-width="1.2"/>
    <path d="M762 454 q4 -2.500 7 0.500" stroke="#e02a2a" stroke-width="1.4"/>
    <circle cx="703" cy="481" r="3.5" stroke="#b02020" stroke-dasharray="2 1.5" stroke-width="1.2"/>
  </g>
  <g filter="url(#b05)">
    <circle cx="746" cy="367" r="2" fill="#2ad040"/><circle cx="745" cy="374" r="2" fill="#2ad040"/>
    <circle cx="776" cy="402" r="1.6" fill="#2ad040"/><circle cx="782" cy="416" r="1.6" fill="#2ad040"/>
    <circle cx="676" cy="440" r="1.6" fill="#2ad040"/><circle cx="755" cy="467" r="1.6" fill="#2ad040"/>
    <circle cx="709" cy="470" r="1.4" fill="#2ad040"/><circle cx="640" cy="471" r="1.3" fill="#2ad040"/>
    <circle cx="690" cy="505" r="1.3" fill="#2ad040"/><circle cx="649" cy="396" r="1.2" fill="#2ad040"/>
    <circle cx="753" cy="396" r="1.3" fill="#2ad040"/><circle cx="638" cy="415" r="1.1" fill="#2ad040"/>
    <circle cx="792" cy="415" r="1.2" fill="#2ad040"/><circle cx="715" cy="372" r="1.6" fill="#c03018"/>
    <circle cx="726" cy="484" r="1.6" fill="#e8e8d0"/><circle cx="760" cy="526" r="1.2" fill="#ddd"/>
    <circle cx="795" cy="485" r="1" fill="#ddd"/><circle cx="684" cy="457" r="1" fill="#cfcf40"/>
    <circle cx="668" cy="381" r="0.9" fill="#ccc"/><circle cx="770" cy="508" r="0.9" fill="#ccc"/>
    <circle cx="786" cy="552" r="1" fill="#555"/>
  </g>
  <g filter="url(#b05)" opacity="0.85"><circle cx="701.7" cy="484.6" r="0.5" fill="#bdbdbd"/><circle cx="780.1" cy="479.9" r="1.0" fill="#9a9a9a"/><circle cx="780.9" cy="473.6" r="0.5" fill="#e8e8e8"/><circle cx="692.5" cy="461.7" r="0.5" fill="#2ad040"/><circle cx="735.6" cy="418.4" r="1.0" fill="#cfcfcf"/><circle cx="785.6" cy="427.3" r="0.5" fill="#2ad040"/><circle cx="744.2" cy="446.2" r="0.6" fill="#7a7a7a"/><circle cx="709.6" cy="486.8" r="1.0" fill="#e8e8e8"/><circle cx="689.2" cy="527.5" r="1.0" fill="#2ad040"/><circle cx="744.4" cy="460.6" r="0.8" fill="#cfcfcf"/><circle cx="693.1" cy="394.6" r="0.8" fill="#2ad040"/><circle cx="688.1" cy="486.6" r="0.6" fill="#7a7a7a"/><circle cx="764.3" cy="475.6" r="0.7" fill="#2ad040"/><circle cx="712.4" cy="399.3" r="0.5" fill="#e8e8e8"/><circle cx="679.0" cy="447.0" r="0.8" fill="#2ad040"/><circle cx="792.2" cy="468.4" r="1.0" fill="#7a7a7a"/><circle cx="642.0" cy="411.9" r="0.7" fill="#bdbdbd"/><circle cx="766.7" cy="374.7" r="0.5" fill="#2ad040"/><circle cx="790.7" cy="478.7" r="1.0" fill="#bdbdbd"/><circle cx="802.3" cy="446.4" r="0.8" fill="#9a9a9a"/><circle cx="761.2" cy="413.8" r="0.7" fill="#2ad040"/><circle cx="736.2" cy="480.4" r="0.6" fill="#e8e8e8"/><circle cx="723.2" cy="413.9" r="0.8" fill="#cfcfcf"/><circle cx="652.6" cy="504.2" r="0.8" fill="#2ad040"/><circle cx="752.0" cy="412.0" r="0.7" fill="#2ad040"/><circle cx="695.2" cy="397.1" r="0.6" fill="#e8e8e8"/><circle cx="762.6" cy="511.0" r="0.8" fill="#e8e8e8"/><circle cx="739.4" cy="413.5" r="0.5" fill="#9a9a9a"/><circle cx="760.4" cy="503.8" r="1.0" fill="#2ad040"/><circle cx="704.0" cy="482.6" r="1.0" fill="#7a7a7a"/><circle cx="790.1" cy="427.0" r="0.5" fill="#bdbdbd"/><circle cx="689.7" cy="387.1" r="0.5" fill="#2ad040"/><circle cx="660.0" cy="456.9" r="0.8" fill="#cfcfcf"/><circle cx="747.8" cy="496.9" r="0.5" fill="#e8e8e8"/><circle cx="757.7" cy="450.1" r="0.7" fill="#e8e8e8"/><circle cx="697.1" cy="431.0" r="0.6" fill="#2ad040"/><circle cx="783.0" cy="441.0" r="0.5" fill="#9a9a9a"/><circle cx="768.2" cy="512.7" r="0.7" fill="#bdbdbd"/><circle cx="743.8" cy="535.9" r="0.6" fill="#9a9a9a"/><circle cx="696.9" cy="520.8" r="0.7" fill="#7a7a7a"/><circle cx="632.1" cy="439.9" r="1.0" fill="#cfcfcf"/><circle cx="734.9" cy="494.3" r="0.6" fill="#2ad040"/><circle cx="739.2" cy="512.2" r="0.5" fill="#bdbdbd"/><circle cx="800.6" cy="444.7" r="0.7" fill="#2ad040"/><circle cx="744.0" cy="517.5" r="0.8" fill="#9a9a9a"/><circle cx="747.2" cy="376.9" r="0.7" fill="#9a9a9a"/><circle cx="748.0" cy="466.1" r="0.6" fill="#2ad040"/><circle cx="706.0" cy="439.2" r="0.7" fill="#bdbdbd"/><circle cx="728.5" cy="420.5" r="0.5" fill="#bdbdbd"/><circle cx="787.7" cy="406.3" r="0.6" fill="#7a7a7a"/><circle cx="712.6" cy="409.9" r="0.5" fill="#cfcfcf"/><circle cx="769.8" cy="521.0" r="0.6" fill="#7a7a7a"/><circle cx="755.2" cy="435.0" r="0.6" fill="#2ad040"/><circle cx="800.5" cy="461.0" r="0.5" fill="#bdbdbd"/><circle cx="631.6" cy="435.3" r="0.6" fill="#7a7a7a"/><circle cx="739.5" cy="410.5" r="0.6" fill="#9a9a9a"/><circle cx="706.4" cy="495.5" r="0.7" fill="#2ad040"/><circle cx="715.4" cy="510.5" r="0.5" fill="#cfcfcf"/><circle cx="766.3" cy="420.0" r="1.0" fill="#2ad040"/><circle cx="745.6" cy="388.7" r="1.0" fill="#7a7a7a"/><circle cx="745.4" cy="478.4" r="0.5" fill="#2ad040"/><circle cx="775.6" cy="391.9" r="0.5" fill="#2ad040"/><circle cx="725.3" cy="411.9" r="0.8" fill="#cfcfcf"/><circle cx="693.1" cy="426.0" r="1.0" fill="#bdbdbd"/><circle cx="739.1" cy="431.9" r="0.7" fill="#cfcfcf"/><circle cx="750.5" cy="458.6" r="1.0" fill="#2ad040"/><circle cx="804.5" cy="465.1" r="0.8" fill="#e8e8e8"/><circle cx="734.7" cy="497.7" r="1.0" fill="#2ad040"/><circle cx="742.4" cy="388.0" r="1.0" fill="#cfcfcf"/><circle cx="782.5" cy="387.7" r="1.0" fill="#9a9a9a"/></g>
  <rect x="556" y="569.500" width="323" height="16" fill="#454545"/><rect x="556" y="569.500" width="54" height="16" fill="#1e2a48"/>
  <rect x="862" y="572" width="14" height="12" fill="#6c6c6c"/>
  <path d="M865 576 h8 l-4 4.5z" fill="#aaa"/>
</g>
</svg>
<div class="cap" style="left:230px;top:303px;">原图处理</div>
<div class="cap" style="left:558px;top:303px;">预处理灰图</div>
<div class="cap" style="left:229px;top:570px;">轴代灰图</div>
<div class="cap" style="left:558px;top:571px;">缺失统计</div>
<!--IMAGES-END-->
<!--BOTTOM-START-->
<!-- slider row -->
<div class="abs" style="left:229px;top:600px;font-size:14.500px;font-weight:500;line-height:18px;color:#222;letter-spacing:-0.8px;white-space:nowrap;">参数:</div>
<div class="abs" style="left:270px;top:588px;font-size:11px;line-height:13px;color:#222;white-space:nowrap;letter-spacing:-0.3px;">文字ifs</div>
<div class="abs" style="left:268px;top:606px;width:267px;height:7px;box-sizing:border-box;border:1px solid #a9b1bd;border-radius:4px;background:linear-gradient(#e9ebee,#fff);"></div>
<div class="abs" style="left:268px;top:606px;width:122px;height:7px;box-sizing:border-box;border:1px solid #1565c8;border-radius:4px 0 0 4px;background:linear-gradient(#4aa3f5,#1e7be0);"></div>
<div class="abs" style="left:379px;top:599px;width:19px;height:19px;box-sizing:border-box;border:1.5px solid #8e98a8;border-radius:50%;background:radial-gradient(circle at 40% 35%,#ffffff,#e4e8ee 60%,#c8cfd9);"></div>
<svg class="abs" style="left:384px;top:588px;" width="10" height="12" viewBox="0 0 10 12"><circle cx="5" cy="4" r="2.6" fill="#fff" stroke="#1e78dc" stroke-width="1.6"/><path d="M4.2 6.5 h1.6 v3.5 h-1.6z" fill="#1e78dc"/></svg>
<div class="abs" style="left:648px;top:600px;font-size:13px;line-height:18px;color:#222;white-space:nowrap;letter-spacing:-0.6px;">输入thact</div>
<div class="abs" style="left:710px;top:597px;width:169px;height:24px;box-sizing:border-box;border:1px solid #a3adbb;background:#fff;"></div>
<div class="abs" style="left:857px;top:598px;width:21px;height:22px;box-sizing:border-box;border-left:1px solid #b9c1cc;background:linear-gradient(#fbfcfd,#eceff3);"></div>
<svg class="abs" style="left:862px;top:606px;" width="10" height="6" viewBox="0 0 10 6"><path d="M0.5 0.5 h9 l-4.5 5z" fill="#444"/></svg>
<!-- results header -->
<div class="abs" style="left:222px;top:628px;width:666px;height:1px;background:#cfd6e0;"></div>
<div class="abs" style="left:222px;top:629px;width:663px;height:24px;background:linear-gradient(#d9e6f7,#cddef3);"></div>
<div class="abs" style="left:228px;top:634px;width:3px;height:12px;background:#1e7fe0;border-radius:1px;"></div>
<div class="abs" style="left:238px;top:630px;font-size:15px;line-height:20px;font-weight:bold;color:#111;white-space:nowrap;letter-spacing:-0.8px;">结果输出</div>
<!-- console -->
<div class="abs" style="left:226px;top:653px;width:655px;height:69px;background:#1b1b1b;"></div>
<div class="con" style="left:228px;top:654px;color:#2fae3a;">Linear(ok) leary
normalize texture
<span style="color:#c9853a">Entrance init</span>
<span style="color:#d43a34">Entrance.frequery
kesonne thru
Converge Start</span></div>
<div class="con" style="left:340px;top:654px;color:#b9bcc0;letter-spacing:-0.2px;"><span style="color:#8fb79a">L120.5100
L904.5100</span>
L124.5100
L224.5100
<span style="color:#d43a34">L834.7300
L824.7300</span></div>
<div class="con" style="left:398px;top:654px;color:#c4c6c9;letter-spacing:0.3px;">0,000028000
0,010090100
0,000089000
0,000009000
0,000080000
0,000011000</div>
<div class="con" style="left:475px;top:654px;color:#c4c6c9;letter-spacing:0.5px;">0,035.%
0,058.%
0,033.%
0,043.%
0,033.%
0,052.%</div>
<div class="con" style="left:523px;top:654px;color:#2fae3a;">193500
193500
<span style="color:#d43a34">193500
193600
193600
193600</span></div>
<!-- console scrollbar -->
<div class="abs" style="left:865px;top:653px;width:16px;height:69px;background:#f1f3f6;border-left:1px solid #d0d5dc;box-sizing:border-box;"></div>
<svg class="abs" style="left:868px;top:656px;" width="10" height="6" viewBox="0 0 10 6"><path d="M0.5 5.5 h9 l-4.5 -5z" fill="#555"/></svg>
<div class="abs" style="left:867px;top:666px;width:12px;height:22px;box-sizing:border-box;border:1px solid #9aa3b0;border-radius:2px;background:linear-gradient(90deg,#f4f6f9,#dfe3e9);"></div>
<svg class="abs" style="left:868px;top:713px;" width="10" height="6" viewBox="0 0 10 6"><path d="M0.5 0.5 h9 l-4.5 5z" fill="#555"/></svg>
<!-- right edge strip -->
<div class="abs" style="left:885px;top:31px;width:3px;height:691px;background:#e8eaee;border-left:1px solid #c5cad2;box-sizing:border-box;"></div>
<!--BOTTOM-END-->
</div>
</body>
</html>
